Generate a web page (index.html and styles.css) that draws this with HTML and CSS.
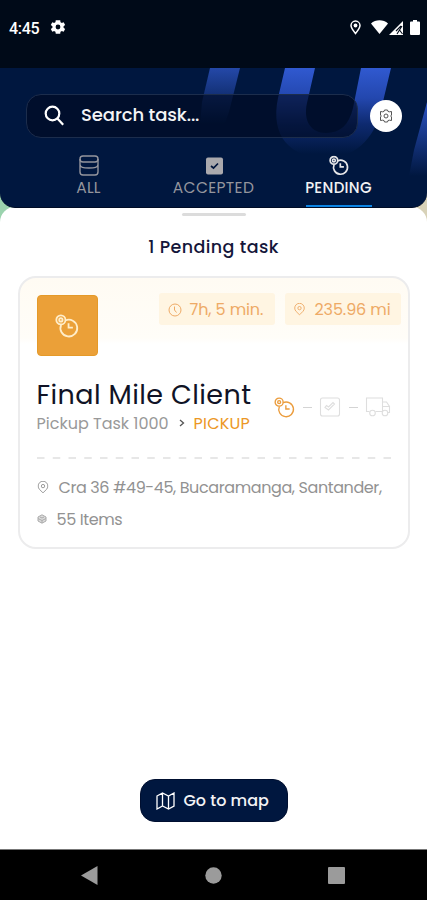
FILE: index.html
```html
<!DOCTYPE html>
<html lang="en">
<head>
<meta charset="utf-8">
<title>Tasks</title>
<link rel="stylesheet" href="styles.css">
</head>
<body>
<svg class="defs" width="0" height="0" aria-hidden="true">
  <symbol id="pending" viewBox="0 0 20 20">
    <path d="M8.600 5.400a7 7 0 1 1-3.500 3.600"/>
    <path d="M11.300 7.800v3.600h3.600"/>
    <circle cx="4.900" cy="4.900" r="3.800"/>
    <circle cx="4.900" cy="4.900" r="1.400"/>
  </symbol>
  <symbol id="pin" viewBox="0 0 12 14">
    <path d="M6 12.800 2.300 9.100a5.200 5.200 0 1 1 7.400 0z"/>
    <circle cx="6" cy="5.500" r="1.800"/>
  </symbol>
</svg>
<div class="phone">
  <div class="status">
    <span class="time">4:45</span>
    <svg class="gear" width="18" height="18" viewBox="0 0 24 24"><path fill="#fff" fill-rule="evenodd" d="M19.400 13a7.500 7.500 0 0 0 0-2l2.100-1.700-2-3.500-2.500 1a7.300 7.300 0 0 0-1.700-1L15 3H9l-.4 2.800a7.300 7.300 0 0 0-1.700 1l-2.500-1-2 3.500L4.600 11a7.500 7.500 0 0 0 0 2l-2.200 1.700 2 3.500 2.500-1a7.300 7.300 0 0 0 1.700 1L9 21h6l.3-2.800a7.300 7.300 0 0 0 1.700-1l2.500 1 2-3.500zM12 15.200a3.200 3.200 0 1 1 0-6.400 3.200 3.200 0 0 1 0 6.400z"/></svg>
    <svg class="loc" width="11" height="15" viewBox="0 0 11 15"><path d="M5.500 13.500C3 10.500 1 8 1 5.600a4.500 4.500 0 0 1 9 0C10 8 8 10.500 5.500 13.500z" fill="none" stroke="#fff" stroke-width="1.500"/><circle cx="5.500" cy="5.500" r="1.900" fill="#fff"/></svg>
    <svg class="wifi" width="17" height="14" viewBox="0 0 17 14"><path fill="#fff" d="M8.500 14 0 3.500C4.500-.8 12.500-.8 17 3.500z"/></svg>
    <svg class="cell" width="15" height="15" viewBox="0 0 15 15"><path fill="#fff" d="M0 15 14 1v14z"/><path d="M8 14l5-8M7 11l5-5M10.500 10l3 4" stroke="#000a18" stroke-width="1.100"/></svg>
    <svg class="batt" width="10" height="15" viewBox="0 0 10 15"><path fill="#fff" d="M1 1.500h2V0h4v1.500h2q1 0 1 1V14q0 1-1 1H1q-1 0-1-1V2.500q0-1 1-1z"/></svg>
  </div>

  <div class="body">
    <header class="header">
      <svg class="decor" width="427" height="140" viewBox="0 0 427 140">
        <defs>
          <linearGradient id="g1" gradientUnits="userSpaceOnUse" x1="0" y1="0" x2="0" y2="56"><stop stop-color="#2448a8"/><stop offset="1" stop-color="#00173f"/></linearGradient>
          <linearGradient id="g2" gradientUnits="userSpaceOnUse" x1="0" y1="0" x2="0" y2="86"><stop stop-color="#3059d0"/><stop offset=".35" stop-color="#2347ae"/><stop offset=".65" stop-color="#0e2a70"/><stop offset="1" stop-color="#00173f"/></linearGradient>
          <linearGradient id="g3" gradientUnits="userSpaceOnUse" x1="0" y1="30" x2="0" y2="108"><stop stop-color="#2d55ca"/><stop offset="1" stop-color="#00173f"/></linearGradient>
        </defs>
        <path fill="url(#g1)" d="M210 0h30l-11 44-5 14h-24l2-24z"/>
        <path fill="url(#g2)" d="M285 0h30l-8 35c-4 18 4 30 19 30 14 0 23-8 27-25L361 0h30l-10 42c-7 30-27 48-55 48-36 0-56-22-48-60z"/>
        <path fill="url(#g3)" d="M427 34v74h-18l5-26z"/>
      </svg>
      <div class="searchrow">
        <div class="search">
          <svg width="22" height="22" viewBox="0 0 22 22" fill="none" stroke="#fff" stroke-width="2.200"><circle cx="8.500" cy="8.500" r="6.800"/><path d="m13.200 13.200 6 6.500"/></svg>
          <span>Search task...</span>
        </div>
        <div class="settings">
          <svg width="14" height="14" viewBox="0 0 14 14" fill="none" stroke="#555" stroke-width="1"><path d="M5 2.500 5.500 1h3L9 2.500l1.500.3 2-.3v3.500l-.8 1 .8 1v3.500l-2-.3L9 11.500 8.500 13h-3L5 11.500l-1.500-.3-2 .3V8l.8-1-.8-1V2.500l2 .3z"/><circle cx="7" cy="7" r="2"/></svg>
        </div>
      </div>
      <nav class="tabs">
        <div class="tab">
          <svg width="20" height="21" viewBox="0 0 20 21" fill="none" stroke="currentColor" stroke-width="1.400"><rect x="1" y="1" width="18" height="6" rx="3"/><path d="M1 4v13q0 3 3 3h12q3 0 3-3V4M1 9.500c.5 3 3 3.500 9 3.500s8.500-.5 9-3.500"/></svg>
          <span class="t-all">ALL</span>
        </div>
        <div class="tab">
          <svg width="20" height="21" viewBox="0 0 20 21"><rect x="2" y="2.500" width="17" height="17" rx="2" fill="#aaa9ad"/><path d="m7 11 2.500 2 4.500-4.500" fill="none" stroke="#00153d" stroke-width="1.700"/></svg>
          <span class="t-acc">ACCEPTED</span>
        </div>
        <div class="tab active">
          <svg class="pend" width="20" height="21" viewBox="0 0 20 20"><use href="#pending"/></svg>
          <span class="t-pen">PENDING</span>
        </div>
      </nav>
    </header>

    <main class="sheet">
      <div class="handle"></div>
      <h1><span>1 Pending task</span></h1>
      <section class="card">
        <div class="top">
          <div class="tile"><svg width="24" height="24" viewBox="0 0 20 20"><use href="#pending"/></svg></div>
          <div class="chip c1">
            <svg width="14" height="14" viewBox="0 0 14 14" fill="none" stroke="currentColor"><circle cx="7" cy="7" r="6"/><path d="M6.500 3.500V7l2 2.500"/></svg>
            <span>7h, 5 min.</span>
          </div>
          <div class="chip c2">
            <svg class="line" width="11" height="13" viewBox="0 0 12 14"><use href="#pin"/></svg>
            <span>235.96 mi</span>
          </div>
        </div>
        <div class="mid">
          <div class="names">
            <div class="client">Final Mile Client</div>
            <div class="sub"><span class="task">Pickup Task 1000</span><svg width="6" height="8" viewBox="0 0 6 8" fill="none" stroke="#555" stroke-width="1.300"><path d="m1 1 3.500 3L1 7"/></svg><span class="kind">PICKUP</span></div>
          </div>
          <div class="steps">
            <svg class="now" width="21" height="21" viewBox="0 0 20 20"><use href="#pending"/></svg>
            <i></i>
            <svg width="22" height="20" viewBox="0 0 22 20" fill="none" stroke="currentColor" stroke-width="1.100"><rect x="1.500" y="1" width="19" height="18" rx="2"/><path d="M6 10.500 9.500 13l6-6-1.500-1.500L9.500 10 7.500 8.500z"/></svg>
            <i></i>
            <svg width="26" height="20" viewBox="0 0 26 20" fill="none" stroke="currentColor" stroke-width="1.100"><path d="M4.500 14.500H1.500V1h16v13.500h-7M17.500 5h4l3 4.500v6h-2M17.500 9.500h7"/><circle cx="7.500" cy="16" r="2.800"/><circle cx="20" cy="16" r="2.800"/></svg>
          </div>
        </div>
        <svg class="dash" width="354" height="2" viewBox="0 0 354 2"><path d="M0 1h354" stroke="#e0e0e0" stroke-width="1.500" stroke-dasharray="7.500 8.250"/></svg>
        <div class="info addr"><svg class="line" width="12" height="13" viewBox="0 0 12 14"><use href="#pin"/></svg><span>Cra 36 #49-45, Bucaramanga, Santander,</span></div>
        <div class="info items"><svg width="10" height="10" viewBox="0 0 10 10" fill="#ddd" stroke="#aaa"><path d="M1 3 5 .8 9 3v4L5 9.200 1 7z"/><path d="m1 4.500 4 2 4-2M5 6.500V9M3 3l2 1 2-1"/></svg><span>55 Items</span></div>
      </section>
      <div class="map">
        <svg width="19" height="18" viewBox="0 0 19 18" fill="none" stroke="#fff" stroke-width="1.300"><path d="M1 4 6.500 1l6 3L18 1v13l-5.500 3-6-3L1 17zM6.500 1v13M12.500 4v13"/></svg>
        <span>Go to map</span>
      </div>
    </main>
  </div>

  <footer class="navbar">
    <svg width="17" height="19" viewBox="0 0 17 19"><path fill="#9b9b9b" d="M0 9.500 16.500 0v19z"/></svg>
    <svg width="17" height="17" viewBox="0 0 17 17"><circle cx="8.500" cy="8.500" r="8.200" fill="#9b9b9b"/></svg>
    <svg width="17" height="17" viewBox="0 0 17 17"><rect width="17" height="17" rx="1" fill="#9b9b9b"/></svg>
  </footer>
</div>
</body>
</html>
```

FILE: styles.css
```css
* { box-sizing: border-box; }
body { margin: 0; font-family: Poppins, Inter, sans-serif; font-feature-settings: "cv11"; }
svg { display: block; flex: none; }
span { white-space: nowrap; }
.defs { position: absolute; }
.phone { width: 427px; height: 900px; display: flex; flex-direction: column; background: #fff; overflow: hidden; }

.status { height: 68px; background: #000a18; display: flex; align-items: center; padding: 0 8px 14px 9px; color: #fff; }
.time { font: 500 16px Roboto, sans-serif; width: 40px; letter-spacing: -.3px; padding-top: 2px; }
.loc { margin-left: auto; }
.wifi { margin-left: 10px; }
.cell { margin-left: 1px; }
.batt { margin: 0 -1px 0 6px; }

.body { height: 781px; display: flex; flex-direction: column; background: linear-gradient(90deg, #9bd3ae 50%, #d8d2b8 50%) 0 0 / 100% 155px no-repeat; }
.header { position: relative; height: 140px; background: #00173f; border-radius: 0 0 15px 15px; border-bottom: 1px solid #000c25; overflow: hidden; padding: 26px 25px 0 26px; display: flex; flex-direction: column; }
.decor { position: absolute; left: 0; top: 0; }
.searchrow { position: relative; display: flex; justify-content: space-between; align-items: center; height: 44px; }
.search { width: 332px; height: 44px; border: 1px solid #1c2d4c; border-radius: 15px; background: rgba(0, 10, 32, .62); display: flex; align-items: center; padding-left: 17px; gap: 15px; color: #f4f4f6; font-size: 18px; font-weight: 500; }
.search span { padding-bottom: 3px; letter-spacing: -.1px; }
.settings { width: 32px; height: 32px; border-radius: 50%; background: #fff; display: grid; place-items: center; }
.tabs { position: relative; display: grid; grid-template-columns: repeat(3, 125px); margin-top: 17px; height: 53px; }
.tab { display: flex; flex-direction: column; align-items: center; color: #94959d; font-size: 15.5px; line-height: 24px; font-weight: 400; }
.tab.active { color: #f2f2f4; font-weight: 500; font-size: 15px; }
.tab.active::after { content: ""; flex: none; width: 66px; height: 3px; margin-top: 5px; background: #0c84e4; }
.t-all { letter-spacing: .2px; }
.t-acc { letter-spacing: .35px; }
.t-pen { letter-spacing: .3px; }
.pend { stroke: #e6e6e8; stroke-width: 1.7; }
.pend, .tile svg, .now, .line { fill: none; }

.sheet { flex: 1; margin-top: -1px; background: #fff; border-radius: 15px 15px 0 0; display: flex; flex-direction: column; align-items: center; }
.handle { width: 64px; height: 3px; margin-top: 6px; background: #dcdcdc; border-radius: 2px; }
h1 { margin: 19px 0 0; font-size: 17.5px; line-height: 24px; font-weight: 500; letter-spacing: .4px; color: #14163a; }
.card { width: 392px; height: 273px; margin-top: 17px; border: 2px solid #ececed; border-radius: 18px; background: linear-gradient(#fffbf3, #fffdf8 60px, #fff 66px); padding: 17px 7px 0 17px; }
.top { display: flex; align-items: flex-start; }
.tile { width: 61px; height: 61px; border-radius: 4px; background: #eba038; border: 1px solid #e59a29; display: grid; place-items: center; margin-right: auto; }
.tile svg { stroke: #ffedc9; stroke-width: 1.5; }
.chip { height: 32px; margin-top: -2px; background: #fff5e2; color: #eeaa66; border-radius: 3px; display: flex; align-items: center; font-size: 16px; padding-top: 1px; }
.c1 { width: 116px; padding-left: 9px; gap: 8px; margin-right: 10px; letter-spacing: -.1px; }
.c2 { width: 116px; padding-left: 9px; gap: 10px; letter-spacing: -.1px; }
.line { stroke: currentColor; stroke-width: 1; }
.mid { display: flex; justify-content: space-between; padding: 21px 10px 0 0; }
.client { font-size: 27px; line-height: 36px; letter-spacing: .4px; color: #101326; }
.sub { display: flex; align-items: center; height: 20px; font-size: 16px; color: #999; }
.sub svg { margin: 0 9px 0 10px; }
.kind { color: #ec9725; letter-spacing: .2px; }
.steps { display: flex; align-items: center; height: 60px; color: #dedede; }
.steps i { width: 9px; height: 1px; background: #d4d4d4; margin: 0 7px 0 8px; }
.now { stroke: #eb9c3c; stroke-width: 1.3; }
.dash { margin-top: 20px; }
.info { display: flex; align-items: center; height: 24px; color: #929292; font-size: 16px; letter-spacing: -.4px; }
.addr { margin-top: 16px; gap: 10px; }
.items { margin-top: 8px; gap: 10px; }
.map { width: 148px; height: 43px; margin-top: 230px; border-radius: 15px; background: #00173f; border: 1px solid #000f30; color: #f3f3f5; display: flex; align-items: center; padding-left: 15px; gap: 9px; font-size: 16px; font-weight: 500; }

.navbar { height: 51px; background: #000; border-top: 1px solid #777; display: flex; justify-content: space-between; align-items: center; padding: 0 82px 0 81px; }
```
